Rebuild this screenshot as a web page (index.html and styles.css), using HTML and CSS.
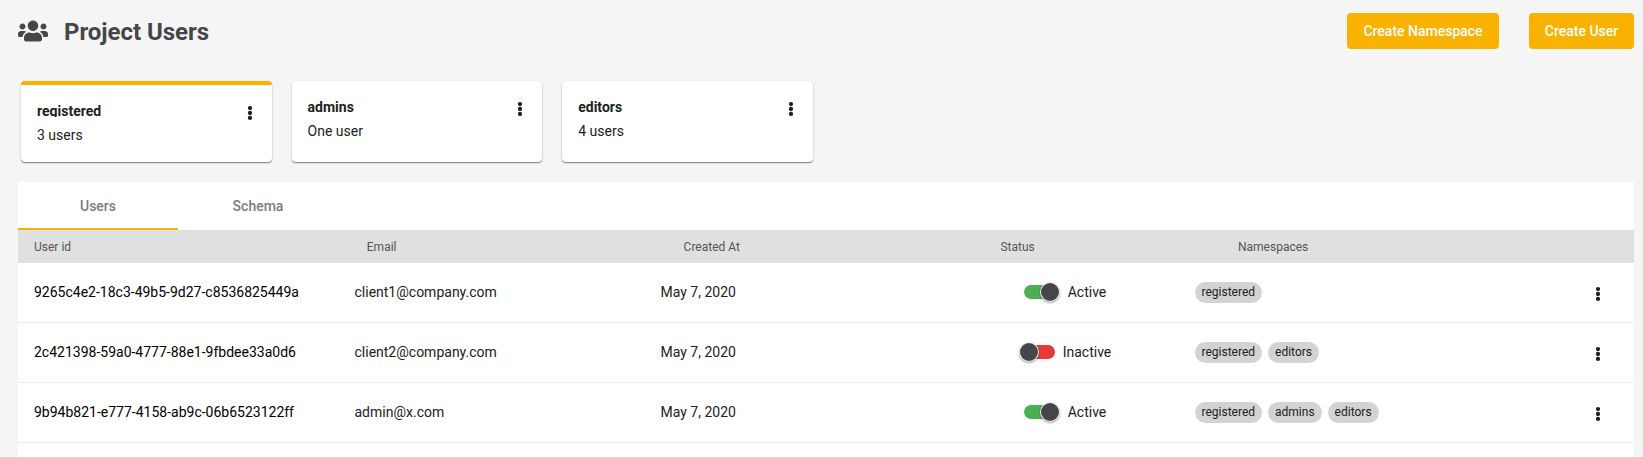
FILE: index.html
```
<!DOCTYPE html>
<html lang="en">
<head>
<meta charset="utf-8">
<title>Project Users</title>
<link rel="stylesheet" href="styles.css">
</head>
<body>
<svg class="defs" width="0" height="0" aria-hidden="true">
  <symbol id="dots" viewBox="0 0 6 16"><circle cx="3" cy="3.1" r="2.15"/><circle cx="3" cy="8" r="2.15"/><circle cx="3" cy="12.9" r="2.15"/></symbol>
</svg>
<header class="header">
  <svg class="header-icon" viewBox="0 0 640 512"><path d="M96 224c35.3 0 64-28.7 64-64s-28.7-64-64-64-64 28.7-64 64 28.7 64 64 64zm448 0c35.3 0 64-28.7 64-64s-28.7-64-64-64-64 28.7-64 64 28.7 64 64 64zm32 32h-64c-17.6 0-33.5 7.1-45.1 18.6 40.3 22.1 68.9 62 75.1 109.4h66c17.7 0 32-14.3 32-32v-32c0-35.3-28.7-64-64-64zm-256 0c61.9 0 112-50.1 112-112S381.9 32 320 32 208 82.1 208 144s50.1 112 112 112zm76.8 32h-8.3c-20.8 10-43.9 16-68.5 16s-47.6-6-68.5-16h-8.3C179.6 288 128 339.6 128 403.2V432c0 26.5 21.5 48 48 48h288c26.5 0 48-21.5 48-48v-28.8c0-63.6-51.6-115.2-115.2-115.2zm-223.7-13.4C161.5 263.1 145.6 256 128 256H64c-35.3 0-64 28.7-64 64v32c0 17.7 14.3 32 32 32h65.9c6.3-47.4 34.9-87.3 75.2-109.4z"/></svg>
  <h1 class="title">Project Users</h1>
  <div class="actions">
    <button class="btn btn-namespace">Create Namespace</button>
    <button class="btn btn-user">Create User</button>
  </div>
</header>
<section class="cards">
  <article class="card card-selected">
    <div class="card-text"><h2 class="card-name">registered</h2><p class="card-count">3 users</p></div>
    <svg class="dots"><use href="#dots"/></svg>
  </article>
  <article class="card">
    <div class="card-text"><h2 class="card-name">admins</h2><p class="card-count">One user</p></div>
    <svg class="dots"><use href="#dots"/></svg>
  </article>
  <article class="card">
    <div class="card-text"><h2 class="card-name">editors</h2><p class="card-count">4 users</p></div>
    <svg class="dots"><use href="#dots"/></svg>
  </article>
</section>
<main class="panel">
  <nav class="tabs">
    <a class="tab tab-active">Users</a>
    <a class="tab">Schema</a>
  </nav>
  <div class="thead">
    <span>User id</span><span>Email</span><span>Created At</span><span>Status</span><span>Namespaces</span>
  </div>
  <div class="row">
    <span class="uid">9265c4e2-18c3-49b5-9d27-c8536825449a</span>
    <span>client1@company.com</span>
    <span class="date">May 7, 2020</span>
    <div class="status"><i class="toggle on"></i><span>Active</span></div>
    <div class="chips"><span class="chip">registered</span></div>
    <svg class="dots"><use href="#dots"/></svg>
  </div>
  <div class="row">
    <span class="uid">2c421398-59a0-4777-88e1-9fbdee33a0d6</span>
    <span>client2@company.com</span>
    <span class="date">May 7, 2020</span>
    <div class="status"><i class="toggle"></i><span>Inactive</span></div>
    <div class="chips"><span class="chip">registered</span><span class="chip">editors</span></div>
    <svg class="dots"><use href="#dots"/></svg>
  </div>
  <div class="row">
    <span class="uid">9b94b821-e777-4158-ab9c-06b6523122ff</span>
    <span>admin@x.com</span>
    <span class="date">May 7, 2020</span>
    <div class="status"><i class="toggle on"></i><span>Active</span></div>
    <div class="chips"><span class="chip">registered</span><span class="chip">admins</span><span class="chip">editors</span></div>
    <svg class="dots"><use href="#dots"/></svg>
  </div>
</main>
</body>
</html>
```
FILE: styles.css
```
* { box-sizing: border-box; }
body {
  margin: 0;
  height: 457px;
  overflow: hidden;
  display: flex;
  flex-direction: column;
  background: #f5f5f5;
  color: #212121;
  font-family: Roboto, sans-serif;
  font-size: 14px;
}
.defs { position: absolute; }
h1, h2, p { margin: 0; }
.header {
  display: flex;
  align-items: center;
  height: 62px;
  padding: 0 9px 0 18px;
}
.header-icon { width: 30px; height: 24px; fill: #464648; }
.title { margin: 2px 0 0 16px; font-size: 24px; line-height: 28px; font-weight: 700; letter-spacing: -.04px; color: #464648; }
.actions { display: flex; gap: 30px; margin-left: auto; }
.btn {
  height: 36px;
  padding: 0;
  border: 0;
  border-radius: 4px;
  background: #f9b200;
  color: #fff;
  font: 500 14px Roboto, sans-serif;
}
.btn-namespace { width: 152px; }
.btn-user { width: 105px; }
.cards { display: flex; gap: 20px; padding: 19px 21px 20px; }
.card {
  display: flex;
  justify-content: space-between;
  width: 250.6px;
  height: 81px;
  padding: 19px 19.1px 0 16px;
  border-radius: 4px;
  background: #fff;
  box-shadow: 0 1px 1px rgba(0,0,0,.42), 0 1px 3px rgba(0,0,0,.12);
}
.card-selected { border-top: 4px solid #f9b200; }
.card-name { height: 13px; font-size: 14px; line-height: 14px; font-weight: 700; }
.card-selected .card-name { overflow: hidden; }
.card-count { margin-top: 8px; line-height: 20px; }
.dots { width: 6px; height: 16px; fill: #212121; }
.card .dots { margin-top: 1px; }
.panel { flex: 1; margin: 0 9px 0 18px; background: #fff; }
.tabs { display: flex; height: 48px; }
.tab {
  width: 160px;
  border-bottom: 2px solid transparent;
  color: #7b7b7b;
  font-weight: 500;
  line-height: 48px;
  text-align: center;
}
.tab-active { border-color: #f9b200; }
.thead, .row { display: grid; align-items: center; padding-left: 16px; }
.thead {
  grid-template-columns: 332.8px 316.8px 316.8px 237.6px 1fr;
  height: 33px;
  background: #e0e0e0;
  color: #555;
  font-size: 12px;
}
.row {
  grid-template-columns: 320.5px 306px 313px 221px 400px 1fr;
  height: 60px;
  padding-bottom: 1px;
  border-bottom: 1px solid #ececec;
}
.uid { color: #000; }
.status { display: flex; align-items: center; justify-content: center; gap: 8px; width: 184px; }
.toggle {
  display: flex;
  align-items: center;
  width: 35px;
  height: 14px;
  border-radius: 7px;
  background: #e53935;
}
.toggle::before {
  content: "";
  width: 18px;
  height: 18px;
  flex: none;
  border-radius: 50%;
  background: #464648;
  box-shadow: 0 0 0 1px #f0f0f0, 0 1px 2px 1px rgba(0,0,0,.4);
}
.toggle.on { justify-content: flex-end; margin: 0 .5px 0 -.5px; background: #4caf50; }
.chips { display: flex; gap: 6px; padding-top: 1px; }
.chip {
  height: 21px;
  padding: 0 7px;
  border-radius: 10.5px;
  background: #d3d3d3;
  font-size: 12px;
  line-height: 21px;
}
.row .dots { margin-top: 4px; }
```
